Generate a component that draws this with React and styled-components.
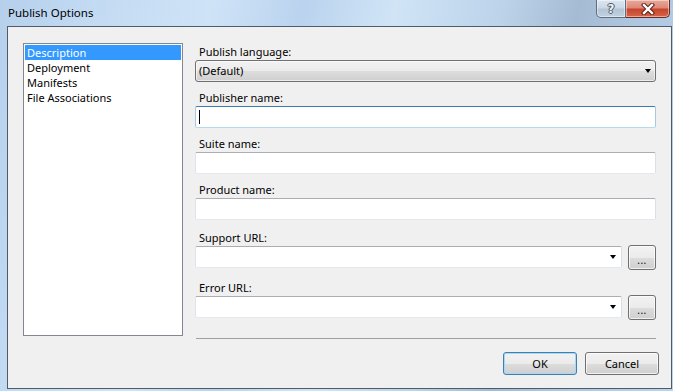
import React from "react";
import styled, { createGlobalStyle } from "styled-components";

const Global = createGlobalStyle`
  html, body { margin: 0; padding: 0; background: #ffffff; }
  body { font-family: "Noto Sans", "Open Sans", sans-serif; font-size: 11px; color: #000; }
  * { box-sizing: border-box; }
`;

const Window = styled.div`
  width: 673px;
  height: 391px;
  display: flex;
  flex-direction: column;
  overflow: hidden;
  background:
    linear-gradient(103deg,
      #b6d0ec 0%, #c2daf2 12%, #cfe3f7 28%, #bad3ee 40%,
      #d0e4f6 52%, #bcd3ea 66%, #a4bbd3 76%, #afc6df 84%, #bdd4ec 100%);
`;

const TitleBar = styled.div`
  height: 26px;
  flex: none;
  display: flex;
  align-items: flex-start;
  justify-content: space-between;
`;

const Title = styled.div`
  padding: 5px 0 0 8px;
  font-size: 11.5px;
  line-height: 16px;
  color: #000;
`;

const CaptionButtons = styled.div`
  display: flex;
  margin-right: 3px;
`;

const CaptionButton = styled.div`
  width: ${(p) => p.$w}px;
  height: 18px;
  display: flex;
  align-items: center;
  justify-content: center;
  border: 1px solid ${(p) => (p.$close ? "#6b2a22" : "#5d6c80")};
  border-top: none;
  ${(p) => (p.$close ? "border-left: none;" : "")}
  border-radius: ${(p) => (p.$close ? "0 0 5px 0" : "0 0 0 5px")};
  background: ${(p) =>
    p.$close
      ? "linear-gradient(#e9a99b 0%, #dd8a78 45%, #c9442d 55%, #d4664a 100%)"
      : "linear-gradient(#dce6f0 0%, #cbd8e6 45%, #b4c4d6 55%, #c3d2e2 100%)"};
  box-shadow: inset 0 0 0 1px rgba(255, 255, 255, 0.45);
`;

const HelpGlyph = styled.span`
  font-family: "DejaVu Sans", sans-serif;
  font-weight: bold;
  font-size: 12px;
  line-height: 12px;
  color: #eef2f6;
  text-shadow: 1px 0 0 #4a5566, -1px 0 0 #4a5566, 0 1px 0 #4a5566, 0 -1px 0 #4a5566;
`;

const Client = styled.div`
  flex: 1;
  margin: 0 1px 2px 7px;
  border: 1px solid #4f5b6b;
  background: #f0f0f0;
  display: flex;
  align-items: flex-start;
  padding: 16px 12px 0 15px;
  gap: 12px;
`;

const ListBox = styled.div`
  width: 160px;
  height: 293px;
  flex: none;
  border: 1px solid #828790;
  background: #fff;
  padding: 1px;
`;

const ListItem = styled.div`
  height: 15px;
  line-height: 15px;
  padding-left: 2px;
  font-size: 11px;
  white-space: nowrap;
  background: ${(p) => (p.$selected ? "#3399ff" : "transparent")};
  color: ${(p) => (p.$selected ? "#fff" : "#000")};
`;

const RightColumn = styled.div`
  flex: 1;
  display: flex;
  flex-direction: column;
  padding-top: 1px;
`;

const Form = styled.div`
  width: 461px;
  display: flex;
  flex-direction: column;
`;

const Label = styled.div`
  height: 16px;
  line-height: 16px;
  padding-left: 4px;
  margin-top: ${(p) => p.$mt || 0}px;
  font-size: 11px;
`;

const TextBox = styled.div`
  position: relative;
  height: 22px;
  flex: 1;
  background: #fff;
  border: 1px solid;
  border-radius: 2px;
  border-color: ${(p) =>
    p.$focused ? "#3d7bad #a4c9e3 #b7d9ed #a4c9e3" : "#abadb3 #dbdfe6 #e3e9ef #e2e3ea"};
`;

const Caret = styled.span`
  position: absolute;
  left: 3px;
  top: 3px;
  width: 1px;
  height: 14px;
  background: #000;
`;

const DropArrow = styled.span`
  position: absolute;
  right: ${(p) => p.$right || 5}px;
  top: 8px;
  width: 0;
  height: 0;
  border-left: 3.5px solid transparent;
  border-right: 3.5px solid transparent;
  border-top: 4px solid #000;
`;

const DropList = styled.div`
  position: relative;
  height: 22px;
  border: 1px solid #707070;
  border-radius: 3px;
  background: linear-gradient(#f2f2f2 0%, #ebebeb 50%, #dddddd 51%, #cfcfcf 100%);
  padding-left: 3px;
  line-height: 20px;
  font-size: 11px;
  box-shadow: inset 0 0 0 1px rgba(255, 255, 255, 0.6);
`;

const FieldRow = styled.div`
  display: flex;
  align-items: center;
  gap: 6px;
  height: 22px;
`;

const Button = styled.div`
  width: ${(p) => p.$w}px;
  height: ${(p) => p.$h}px;
  flex: none;
  display: flex;
  align-items: center;
  justify-content: center;
  font-size: 11px;
  border: 1px solid ${(p) => (p.$default ? "#3c7fb1" : "#707070")};
  border-radius: 3px;
  background: linear-gradient(#f2f2f2 0%, #ebebeb 50%, #dddddd 51%, #cfcfcf 100%);
  box-shadow: inset 0 0 0 1px ${(p) => (p.$default ? "#a8d8f4" : "rgba(255,255,255,0.7)")};
`;

const Dots = styled.span`
  font-size: 10px;
  line-height: 10px;
  margin-top: 6px;
  letter-spacing: 0.5px;
`;

const Separator = styled.div`
  width: 460px;
  margin: 20px 0 0 1px;
  height: 1px;
  background: #a0a0a0;
`;

const ButtonBar = styled.div`
  display: flex;
  justify-content: flex-end;
  gap: 8px;
  margin-top: 13px;
`;

const items = ["Description", "Deployment", "Manifests", "File Associations"];

function CloseGlyph() {
  return (
    <svg width="14" height="12" viewBox="0 0 14 12">
      <path d="M3 2 L11 10 M11 2 L3 10" stroke="#5a1f16" strokeWidth="4.4" strokeLinecap="square" />
      <path d="M3 2 L11 10 M11 2 L3 10" stroke="#ffffff" strokeWidth="2.4" strokeLinecap="square" />
    </svg>
  );
}

export default function App() {
  return (
    <>
      <Global />
      <Window>
        <TitleBar>
          <Title>Publish Options</Title>
          <CaptionButtons>
            <CaptionButton $w={30}>
              <HelpGlyph>?</HelpGlyph>
            </CaptionButton>
            <CaptionButton $w={44} $close>
              <CloseGlyph />
            </CaptionButton>
          </CaptionButtons>
        </TitleBar>
        <Client>
          <ListBox>
            {items.map((it, i) => (
              <ListItem key={it} $selected={i === 0}>
                {it}
              </ListItem>
            ))}
          </ListBox>
          <RightColumn>
            <Form>
              <Label>Publish language:</Label>
              <DropList>
                (Default)
                <DropArrow $right={4} />
              </DropList>

              <Label $mt={8}>Publisher name:</Label>
              <FieldRow>
                <TextBox $focused>
                  <Caret />
                </TextBox>
              </FieldRow>

              <Label $mt={8}>Suite name:</Label>
              <FieldRow>
                <TextBox />
              </FieldRow>

              <Label $mt={8}>Product name:</Label>
              <FieldRow>
                <TextBox />
              </FieldRow>

              <Label $mt={10}>Support URL:</Label>
              <FieldRow>
                <TextBox>
                  <DropArrow $right={5} />
                </TextBox>
                <Button $w={28} $h={25}>
                  <Dots>...</Dots>
                </Button>
              </FieldRow>

              <Label $mt={12}>Error URL:</Label>
              <FieldRow>
                <TextBox>
                  <DropArrow $right={5} />
                </TextBox>
                <Button $w={28} $h={25}>
                  <Dots>...</Dots>
                </Button>
              </FieldRow>
            </Form>
            <Separator />
            <ButtonBar>
              <Button $w={74} $h={23} $default>
                OK
              </Button>
              <Button $w={74} $h={23}>
                Cancel
              </Button>
            </ButtonBar>
          </RightColumn>
        </Client>
      </Window>
    </>
  );
}
